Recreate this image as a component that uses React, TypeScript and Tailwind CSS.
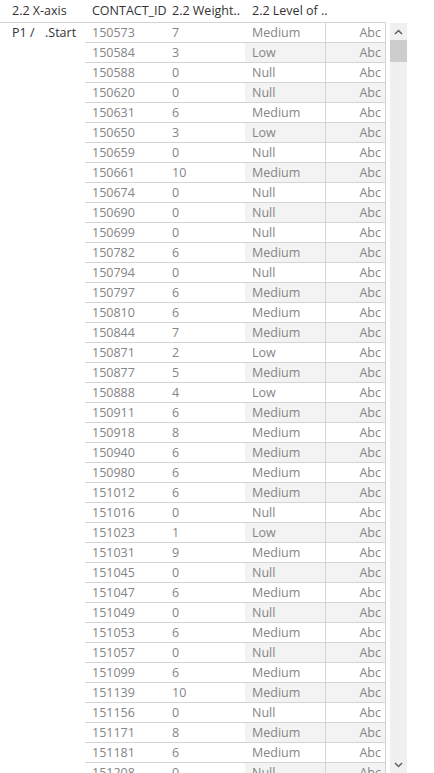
import React from "react";

const rows: [string, string, string][] = [
  ["150573", "7", "Medium"],
  ["150584", "3", "Low"],
  ["150588", "0", "Null"],
  ["150620", "0", "Null"],
  ["150631", "6", "Medium"],
  ["150650", "3", "Low"],
  ["150659", "0", "Null"],
  ["150661", "10", "Medium"],
  ["150674", "0", "Null"],
  ["150690", "0", "Null"],
  ["150699", "0", "Null"],
  ["150782", "6", "Medium"],
  ["150794", "0", "Null"],
  ["150797", "6", "Medium"],
  ["150810", "6", "Medium"],
  ["150844", "7", "Medium"],
  ["150871", "2", "Low"],
  ["150877", "5", "Medium"],
  ["150888", "4", "Low"],
  ["150911", "6", "Medium"],
  ["150918", "8", "Medium"],
  ["150940", "6", "Medium"],
  ["150980", "6", "Medium"],
  ["151012", "6", "Medium"],
  ["151016", "0", "Null"],
  ["151023", "1", "Low"],
  ["151031", "9", "Medium"],
  ["151045", "0", "Null"],
  ["151047", "6", "Medium"],
  ["151049", "0", "Null"],
  ["151053", "6", "Medium"],
  ["151057", "0", "Null"],
  ["151099", "6", "Medium"],
  ["151139", "10", "Medium"],
  ["151156", "0", "Null"],
  ["151171", "8", "Medium"],
  ["151181", "6", "Medium"],
  ["151208", "0", "Null"],
];

export default function App() {
  return (
    <div
      className="w-[434px] h-[773px] overflow-hidden bg-white text-[12.5px] flex flex-col"
      style={{ fontFamily: '"Open Sans", "Noto Sans", sans-serif' }}
    >
      {/* header */}
      <div className="flex h-[23px] shrink-0 items-center text-[#333] w-[386px] border-b border-[#d4d4d4]">
        <div className="w-[85px] pl-[12px] whitespace-nowrap">2.2 X-axis</div>
        <div className="w-[80px] pl-[7px] whitespace-nowrap">CONTACT_ID</div>
        <div className="w-[80px] pl-[7px] whitespace-nowrap">2.2 Weight..</div>
        <div className="w-[81px] pl-[7px] whitespace-nowrap">2.2 Level of ..</div>
      </div>
      <div className="flex flex-1 min-h-0">
        {/* row header column */}
        <div className="w-[85px] shrink-0 flex h-[20px] pt-[1px] items-center text-[#333] whitespace-nowrap">
          <span className="pl-[12px] w-[45px]">P1 /</span>
          <span>.Start</span>
        </div>
        {/* table */}
        <div className="w-[301px] shrink-0 border-r border-[#d4d4d4]">
          {rows.map(([id, w, lvl], i) => {
            const band = i % 2 === 1;
            return (
              <div
                key={id}
                className="flex h-[20px] border-b border-[#d4d4d4] text-[#858585]"
              >
                <div className="w-[80px] pl-[7px] pt-[1px] flex items-center">{id}</div>
                <div className="w-[80px] pl-[7px] pt-[1px] flex items-center">{w}</div>
                <div
                  className={`w-[81px] pl-[7px] pt-[1px] flex items-center border-r border-[#d4d4d4] ${band ? "bg-[#f3f3f3]" : "bg-white"}`}
                >
                  {lvl}
                </div>
                <div
                  className={`flex-1 pr-[4px] pt-[1px] flex items-center justify-end ${band ? "bg-[#f3f3f3]" : "bg-white"}`}
                >
                  Abc
                </div>
              </div>
            );
          })}
        </div>
        {/* scrollbar */}
        <div className="ml-[4px] w-[17px] shrink-0 bg-[#f0f0f0] flex flex-col">
          <div className="h-[17px] flex items-center justify-center">
            <svg width="9" height="6" viewBox="0 0 9 6">
              <path d="M1 5 L4.5 1.5 L8 5" fill="none" stroke="#606060" strokeWidth="1.5" />
            </svg>
          </div>
          <div className="h-[22px] bg-[#cdcdcd]" />
          <div className="flex-1" />
          <div className="h-[17px] flex items-center justify-center">
            <svg width="9" height="6" viewBox="0 0 9 6">
              <path d="M1 1 L4.5 4.5 L8 1" fill="none" stroke="#606060" strokeWidth="1.5" />
            </svg>
          </div>
        </div>
      </div>
    </div>
  );
}
